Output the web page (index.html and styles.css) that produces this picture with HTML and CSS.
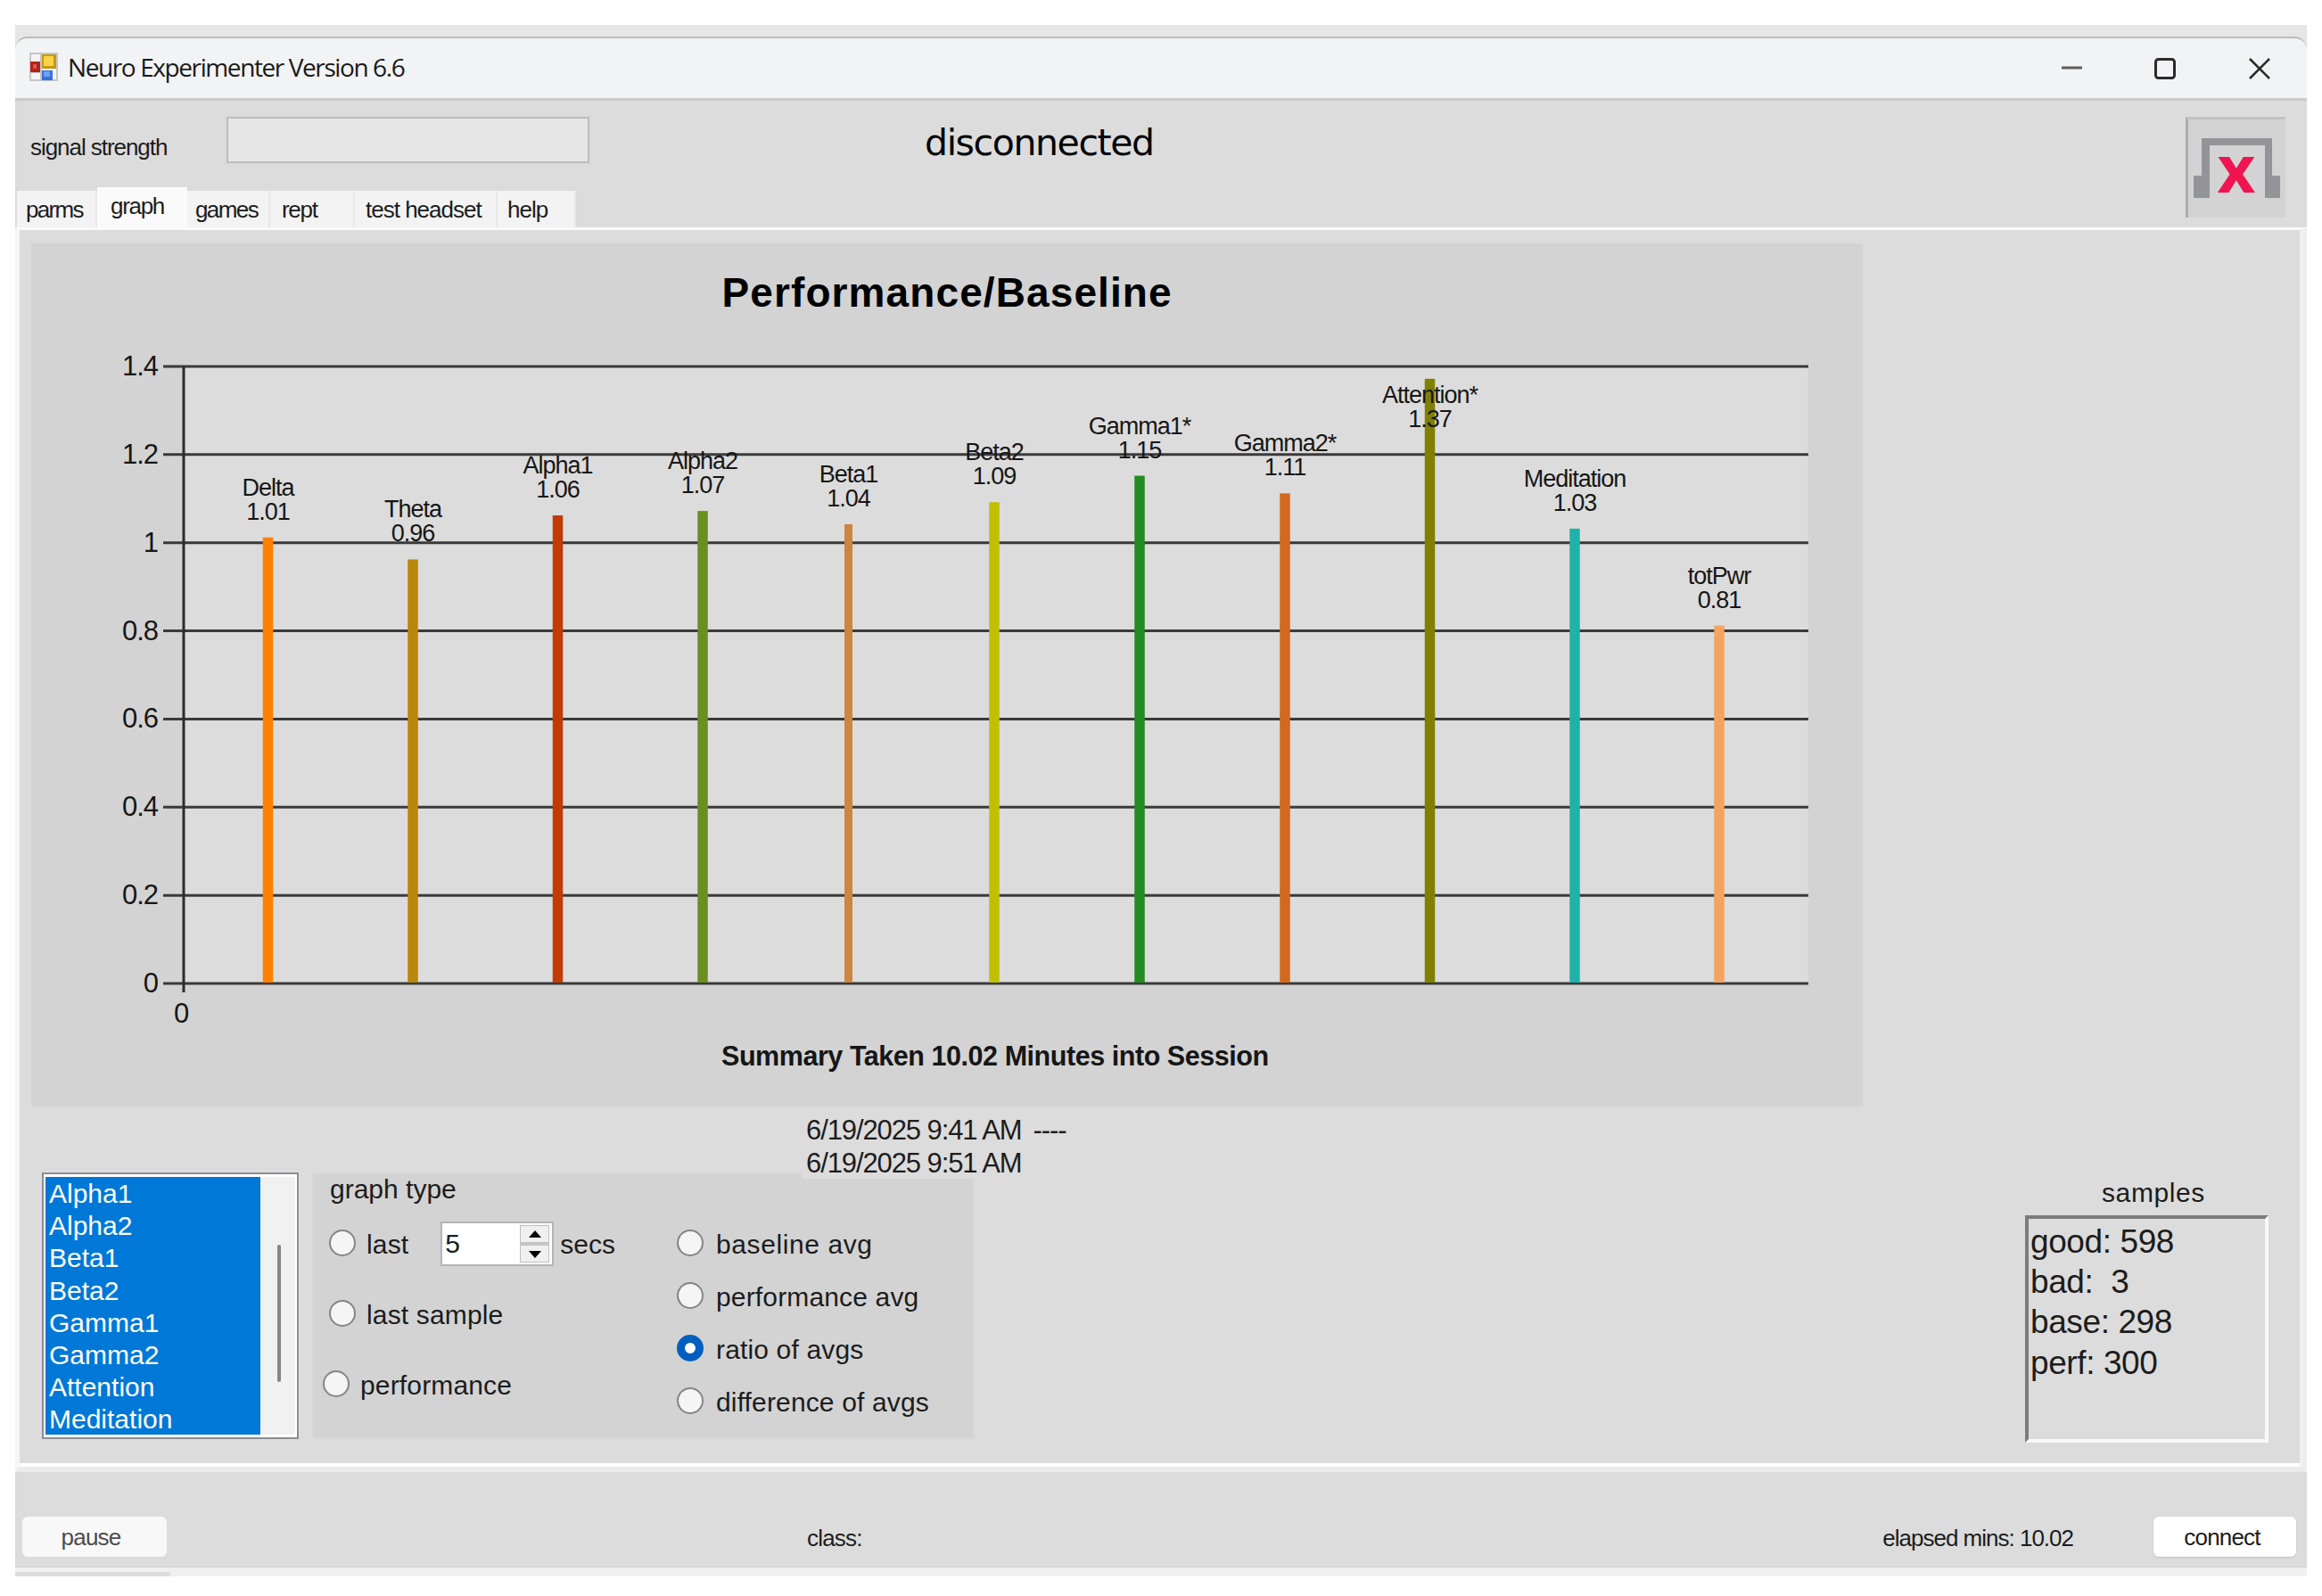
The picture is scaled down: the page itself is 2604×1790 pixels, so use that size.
FILE: index.html
```html
<!DOCTYPE html>
<html lang="en">
<head>
    <meta charset="UTF-8">
    <title>Neuro Experimenter Version 6.6</title>
    <link rel="stylesheet" href="styles.css">
    <script src="chart.js" defer></script>
</head>
<body>
    <div class="window">
        <div class="titlebar">
            <svg class="app-icon" width="32" height="32" viewBox="0 0 32 32">
                <rect x="1" y="1" width="30" height="30" fill="#f4f4f4" stroke="#c4c6c8" stroke-width="2"/>
                <path d="M13 1V31M1 11H13M1 22H13M25 20V31" stroke="#c4c6c8" stroke-width="2"/>
                <rect x="14" y="2" width="16" height="16" fill="#c9980c"/>
                <rect x="16" y="4" width="11" height="11" fill="#fbd348"/>
                <rect x="1" y="10" width="11" height="12" fill="#b5221c"/>
                <rect x="4" y="13" width="4" height="5" fill="#e0564c"/>
                <rect x="14" y="20" width="12" height="11" fill="#3670dc"/>
                <rect x="16" y="21" width="7" height="6" fill="#6ba0f4"/>
            </svg>
            <span class="title">Neuro Experimenter Version 6.6</span>
            <svg class="controls" width="236" height="26" viewBox="0 0 236 26">
                <path d="M1 12H24" stroke="#5c5c5c" stroke-width="3"/>
                <rect x="106.5" y="2.5" width="21" height="21" rx="3" fill="none" stroke="#2a2a2a" stroke-width="3"/>
                <path d="M212 2L234 24M234 2L212 24" stroke="#2a2a2a" stroke-width="2.6"/>
            </svg>
        </div>

        <div class="header">
            <div class="header-left">
                <div class="status">
                    <span class="signal">signal strength</span>
                    <div class="progress"></div>
                    <span class="state">disconnected</span>
                </div>
                <div class="tabs">
                    <div class="tab parms">parms</div>
                    <div class="tab graph active">graph</div>
                    <div class="tab games">games</div>
                    <div class="tab rept">rept</div>
                    <div class="tab test">test headset</div>
                    <div class="tab help">help</div>
                </div>
            </div>
            <div class="headset">
                <svg width="109" height="110" viewBox="0 0 109 110">
                    <path d="M15 21H94V63H103V88H86V29H24V88H6V63H15Z" fill="#929498"/>
                    <text x="54" y="82" text-anchor="middle" class="headset-x">x</text>
                </svg>
            </div>
        </div>

        <div class="page">
            <svg class="chart" id="chart" width="2054" height="968" viewBox="35 273 2054 968"></svg>
            <div class="dates">6/19/2025 9:41 AM&nbsp; <span class="dashes">----</span><br>6/19/2025 9:51 AM</div>

            <div class="bottom">
                <div class="list">
                    <div class="items">
                        <div>Alpha1</div>
                        <div>Alpha2</div>
                        <div>Beta1</div>
                        <div>Beta2</div>
                        <div>Gamma1</div>
                        <div>Gamma2</div>
                        <div>Attention</div>
                        <div>Meditation</div>
                    </div>
                    <div class="scroll"><div class="thumb"></div></div>
                </div>

                <div class="group">
                    <div class="col-left">
                        <div class="legend">graph type</div>
                        <div class="option opt-last">
                            <span class="radio"></span>
                            <span class="label">last</span>
                            <div class="spinner">
                                <span>5</span>
                                <div class="arrows">
                                    <div class="arrow"><svg width="14" height="9" viewBox="0 0 14 9"><path d="M7 0L14 8H0Z"/></svg></div>
                                    <div class="arrow"><svg width="14" height="9" viewBox="0 0 14 9"><path d="M0 1H14L7 9Z"/></svg></div>
                                </div>
                            </div>
                            <span class="secs">secs</span>
                        </div>
                        <div class="option opt-sample"><span class="radio"></span><span class="label">last sample</span></div>
                        <div class="option opt-perf"><span class="radio"></span><span class="label">performance</span></div>
                    </div>
                    <div class="col-right">
                        <div class="option"><span class="radio"></span><span class="label wide">baseline avg</span></div>
                        <div class="option"><span class="radio"></span><span class="label">performance avg</span></div>
                        <div class="option"><span class="radio checked"></span><span class="label">ratio of avgs</span></div>
                        <div class="option"><span class="radio"></span><span class="label">difference of avgs</span></div>
                    </div>
                </div>

                <div class="samples">
                    <div class="samples-title">samples</div>
                    <div class="samples-box">good: 598<br>bad:&nbsp; 3<br>base: 298<br>perf: 300</div>
                </div>
            </div>
        </div>

        <div class="footer">
            <div class="button pause">pause</div>
            <span class="class-label">class:</span>
            <span class="elapsed">elapsed mins: 10.02</span>
            <div class="button connect">connect</div>
        </div>
        <div class="bottom-edge"><div></div></div>
    </div>
</body>
</html>
```
FILE: styles.css
```css
body{
    margin: 0;
    background: #fff;
    font-family: "Liberation Sans", Arial, sans-serif;
    font-size: 26px;
    color: #1c1c1c;
}
svg{
    display: block;
}
.window{
    margin: 28px 0 0 17px;
    width: 2570px;
    height: 1740px;
    padding-top: 13px;
    box-sizing: border-box;
    background: #e6e6e6;
}
.titlebar{
    height: 72px;
    box-sizing: border-box;
    display: flex;
    align-items: flex-start;
    background: #f2f3f5;
    border-top: 2px solid #bcbcbc;
    border-bottom: 3px solid #c9c9c9;
    border-radius: 14px 14px 0 0;
}
.app-icon{
    margin: 16px 0 0 16px;
}
.title{
    margin: 13px 0 0 11px;
    font-family: "Open Sans", sans-serif;
    font-size: 28px;
    line-height: 38px;
    letter-spacing: -1.4px;
    color: #1a1a1a;
    white-space: nowrap;
}
.controls{
    margin: 21px 40px 0 auto;
}

/* signal, tabs, headset */
.header{
    height: 142px;
    display: flex;
    justify-content: space-between;
    background: #dcdcdc;
}
.status{
    height: 97px;
    display: flex;
    align-items: flex-start;
}
.signal{
    margin: 37px 0 0 17px;
    width: 220px;
    line-height: 30px;
    letter-spacing: -1.05px;
}
.progress{
    margin-top: 18px;
    width: 407px;
    height: 52px;
    box-sizing: border-box;
    border: 2px solid #bdbdbd;
    background: #e6e6e6;
}
.state{
    margin: 22px 0 0 376px;
    font-family: "DejaVu Sans", sans-serif;
    font-size: 41px;
    line-height: 50px;
    letter-spacing: -1.4px;
    color: #000;
}
.tabs{
    display: flex;
    align-items: flex-end;
    height: 45px;
    padding-left: 2px;
}
.tab{
    height: 41px;
    box-sizing: border-box;
    padding-top: 6px;
    line-height: 30px;
    letter-spacing: -1.3px;
    background: #f3f3f3;
    border-right: 2px solid #e8e8e8;
    white-space: nowrap;
}
.tab.active{
    height: 45px;
    padding-top: 6px;
    background: #fafafa;
    border-right: none;
}
.parms{ width: 90px; padding-left: 10px; letter-spacing: -1.7px; }
.graph{ width: 101px; padding-left: 15px; }
.games{ width: 93px; padding-left: 9px; letter-spacing: -1.6px; }
.rept{ width: 95px; padding-left: 13px; }
.test{ width: 160px; padding-left: 12px; letter-spacing: -1px; }
.help{ width: 88px; padding-left: 11px; letter-spacing: -1px; }
.headset{
    margin: 18px 24px 0 0;
    width: 112px;
    height: 113px;
    box-sizing: border-box;
    border-left: 3px solid #adadad;
    border-top: 3px solid #c2c2c2;
    background: #d3d3d3;
}
.headset-x{
    font-family: "Open Sans", sans-serif;
    font-weight: bold;
    font-size: 74px;
    fill: #f01450;
}

/* tab page */
.page{
    height: 1396px;
    box-sizing: border-box;
    border-top: 3px solid #fafafa;
    border-left: 5px solid #f6f6f6;
    border-right: 8px solid #efefef;
    border-bottom: 6px solid #ebebeb;
    background: #dcdcdc;
    padding: 15px 0 0 13px;
    box-shadow: inset 0 -4px 0 #fff;
}
.chart{
    background: #d3d3d3;
}
.dates{
    position: relative;
    z-index: 1;
    margin-left: 864px;
    width: 310px;
    height: 81px;
    box-sizing: border-box;
    padding: 9px 0 0 5px;
    font-size: 31px;
    line-height: 36.5px;
    letter-spacing: -1.1px;
    white-space: nowrap;
    background: #dcdcdc;
}
.dashes{
    margin-left: -2px;
}
.bottom{
    display: flex;
    align-items: flex-start;
    margin-top: -7px;
    padding-left: 12px;
    font-size: 30px;
}
.list{
    width: 288px;
    height: 299px;
    box-sizing: border-box;
    border: 2px solid #8b8d92;
    background: #fff;
    padding: 3px 2px;
    display: flex;
}
.items{
    width: 241px;
    background: #0078d7;
    color: #fff;
    line-height: 36.2px;
    padding: 1px 0 0 4px;
    box-sizing: border-box;
}
.scroll{
    flex: 1;
    background: #f1f1f1;
    padding: 76px 0 0 19px;
}
.thumb{
    width: 4px;
    height: 154px;
    border-radius: 2px;
    background: #868686;
}
.group{
    margin-left: 15px;
    width: 743px;
    height: 299px;
    box-sizing: border-box;
    display: flex;
    background: #d3d3d3;
    border: 2px solid #d7d7d7;
}
.col-left{
    width: 407px;
}
.legend{
    margin: 0 0 0 18px;
    line-height: 34px;
}
.option{
    display: flex;
    align-items: center;
    height: 34px;
    white-space: nowrap;
}
.radio{
    width: 30px;
    height: 30px;
    box-sizing: border-box;
    border: 2px solid #858585;
    border-radius: 50%;
    background: #f5f5f5;
}
.radio.checked{
    border: 9px solid #005fbe;
    background: #fff;
}
.label{
    margin: 3px 0 0 12px;
    letter-spacing: 0.15px;
}
.wide{
    letter-spacing: 0.6px;
}
.opt-last{
    margin: 26px 0 0 17px;
}
.opt-sample{
    margin: 45px 0 0 17px;
}
.opt-perf{
    margin: 45px 0 0 10px;
}
.spinner{
    margin: 2px 0 0 36px;
    width: 127px;
    height: 50px;
    box-sizing: border-box;
    border: 2px solid #b2b5ba;
    background: #fff;
    display: flex;
    justify-content: space-between;
    padding: 0 3px;
    line-height: 45px;
}
.arrows{
    width: 33px;
    margin: 2px 0;
    background: #c8c8c8;
    display: flex;
    flex-direction: column;
    gap: 2px;
}
.arrow{
    flex: 1;
    display: flex;
    align-items: center;
    justify-content: center;
    background: #f0f0f0;
    border: 1px solid #c0c0c0;
}
.secs{
    margin: 3px 0 0 7px;
}
.col-right{
    padding-top: 60px;
    display: flex;
    flex-direction: column;
    gap: 25px;
}
.col-right .label{
    margin-left: 14px;
}
.samples{
    margin: 7px 0 0 1178px;
    width: 273px;
}
.samples-title{
    height: 41px;
    margin-left: 86px;
    line-height: 32px;
    letter-spacing: 0.6px;
}
.samples-box{
    height: 255px;
    box-sizing: border-box;
    border: 4px solid #7c7c7c;
    border-right-color: #f8f8f8;
    border-bottom-color: #f8f8f8;
    padding: 3px 0 0 2px;
    font-size: 37px;
    line-height: 45.2px;
    letter-spacing: -0.4px;
}

.footer{
    height: 107px;
    box-sizing: border-box;
    padding: 50px 12px 0 8px;
    display: flex;
    background: #dcdcdc;
    border-bottom: 1px solid #d0d0d0;
}
.footer span{
    margin-top: 9px;
    line-height: 30px;
}
.button{
    height: 45px;
    border-radius: 6px;
    background: #fff;
    text-align: center;
    line-height: 47px;
    letter-spacing: -0.8px;
}
.pause{
    width: 162px;
    padding-right: 8px;
    box-sizing: border-box;
    background: #f8f8f8;
    color: #4c4c4c;
}
.class-label{
    margin-left: 718px;
    letter-spacing: -0.8px;
}
.elapsed{
    margin-left: auto;
    margin-right: 90px;
    letter-spacing: -1px;
}
.connect{
    width: 160px;
    padding-right: 6px;
    box-sizing: border-box;
    box-shadow: 0 1px 2px #bdbdbd;
}
.bottom-edge{
    height: 10px;
    padding-top: 5px;
    box-sizing: border-box;
    background: #f0f0f0;
}
.bottom-edge div{
    width: 174px;
    height: 5px;
    background: #dcdcdc;
}

/* chart */
.chart text{
    fill: #161616;
    font-size: 27px;
    letter-spacing: -1px;
}
.chart .tick{
    font-size: 31px;
}
.chart .heading{
    font-size: 46px;
    font-weight: bold;
    letter-spacing: 1.1px;
    fill: #000;
}
.chart .summary{
    font-size: 30.5px;
    font-weight: bold;
    letter-spacing: -0.45px;
}
```
FILE: chart.js
```javascript
const bars = [
    ['Delta', '1.01', '#ff8000', 300.5],
    ['Theta', '0.96', '#b8860b', 463],
    ['Alpha1', '1.06', '#c03c04', 625.5],
    ['Alpha2', '1.07', '#6b8e23', 788],
    ['Beta1', '1.04', '#cd853f', 951.5],
    ['Beta2', '1.09', '#c0c000', 1115],
    ['Gamma1*', '1.15', '#228b22', 1278],
    ['Gamma2*', '1.11', '#d2691e', 1441],
    ['Attention*', '1.37', '#808000', 1603.5],
    ['Meditation', '1.03', '#20b2aa', 1766],
    ['totPwr', '0.81', '#f4a460', 1928]
];
const left = 206, right = 2028, top0 = 411, bottom = 1103;
const y = v => bottom - v * (bottom - top0) / 1.4;

let svg = `<rect x="${left}" y="${top0}" width="${right - left}" height="${bottom - top0}" fill="#dcdcdc"/>`;

for (let i = 0; i <= 7; i++) {
    let v = i / 5;
    svg += `<line x1="183" x2="${right}" y1="${y(v)}" y2="${y(v)}" stroke="#3a3a3a" stroke-width="3"/>`;
    svg += `<text class="tick" x="177" y="${y(v) + 10}" text-anchor="end">${v}</text>`;
}
svg += `<line x1="${left}" x2="${left}" y1="${top0}" y2="1113" stroke="#2c2c2c" stroke-width="3"/>`;
svg += `<text class="tick" x="203" y="1147" text-anchor="middle">0</text>`;

for (let [name, value, color, x] of bars) {
    let w = name == 'Beta1' ? 9 : 11.5;
    let t = y(value) - 1;
    // the Attention label would leave the plot, so it goes over its bar
    let base = name == 'Attention*' ? 479 : t - 20;
    svg += `<rect x="${x - w / 2}" y="${t}" width="${w}" height="${bottom - 1 - t}" fill="${color}"/>`;
    svg += `<text x="${x}" y="${base - 27}" text-anchor="middle">${name}</text>`;
    svg += `<text x="${x}" y="${base}" text-anchor="middle">${value}</text>`;
}
svg += `<text class="heading" x="809.5" y="344">Performance/Baseline</text>`;
svg += `<text class="summary" x="809" y="1195">Summary Taken 10.02 Minutes into Session</text>`;
document.getElementById('chart').innerHTML = svg;
```
